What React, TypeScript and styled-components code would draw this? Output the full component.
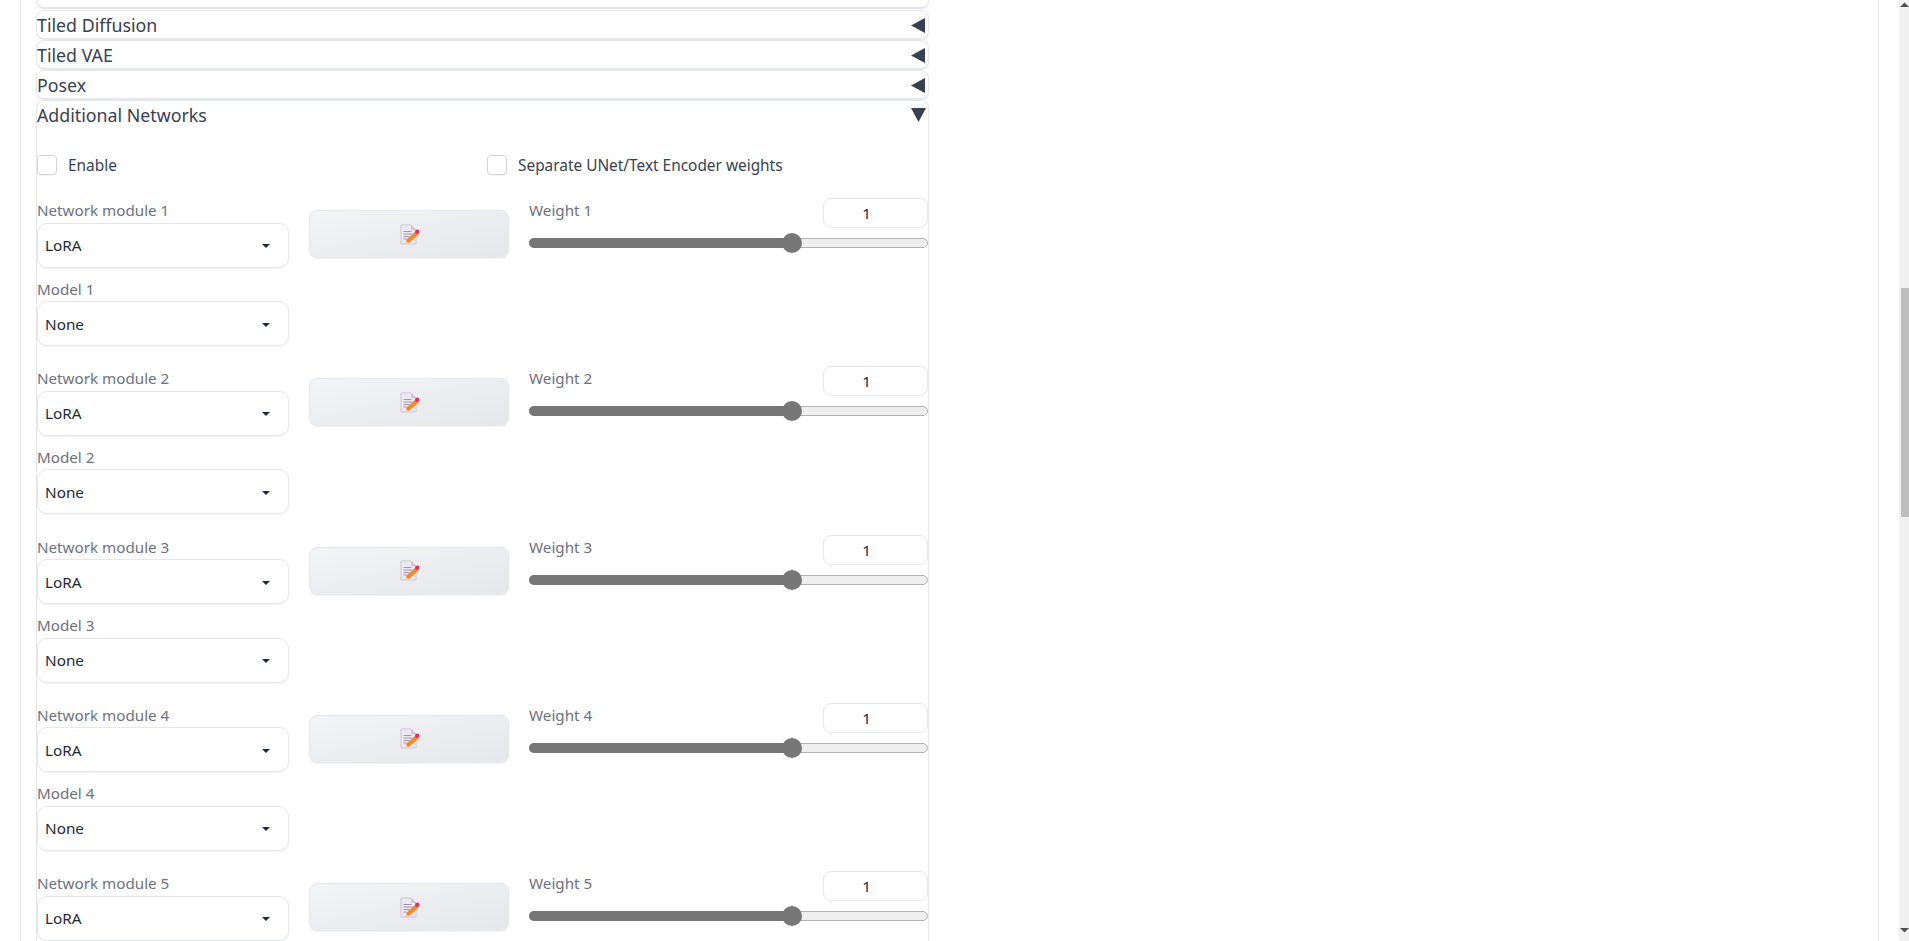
import styled, { createGlobalStyle } from "styled-components";

const GlobalStyle = createGlobalStyle`
  html, body {
    margin: 0;
    height: 941px;
    overflow: hidden;
    background: #fff;
    font-family: "Noto Sans", "Liberation Sans", sans-serif;
  }
`;

const Page = styled.div`
  display: flex;
  height: 941px;
  overflow: hidden;
`;

const Main = styled.div`
  flex: 1;
  padding-left: 20px;
  padding-right: 20px;
`;

const Panel = styled.div`
  height: 941px;
  box-sizing: border-box;
  border-left: 1px solid #e5e7eb;
  border-right: 1px solid #e5e7eb;
  padding-left: 15px;
`;

const Column = styled.div`
  width: 893px;
`;

const ClippedRow = styled.div`
  height: 9px;
  box-sizing: border-box;
  border: 1px solid #e5e7eb;
  border-top: 0;
  border-bottom-width: 2px;
  border-radius: 0 0 8px 8px;
  margin-bottom: 1px;
`;

const Accordion = styled.div<{ $open?: boolean }>`
  box-sizing: border-box;
  height: ${(p) => (p.$open ? "auto" : "30px")};
  border: 1px solid #e5e7eb;
  border-bottom: ${(p) => (p.$open ? "0" : "2px solid #e5e7eb")};
  border-radius: ${(p) => (p.$open ? "8px 8px 0 0" : "8px")};
`;

const AccordionHeader = styled.div`
  display: flex;
  align-items: center;
  justify-content: space-between;
  height: 27px;
  color: #374151;
  font-size: 17.8px;
`;

const Arrow = styled.svg`
  width: 15px;
  height: 15px;
  margin-top: 1px;
  margin-right: 2px;
  fill: #374151;
`;

const CheckRow = styled.div`
  display: flex;
  align-items: center;
  margin-top: 22px;
  height: 30px;
`;

const CheckItem = styled.label<{ $width?: number }>`
  display: flex;
  align-items: center;
  gap: 11px;
  width: ${(p) => (p.$width ? `${p.$width}px` : "auto")};
  color: #374151;
  font-size: 15.4px;
`;

const CheckBox = styled.span`
  display: block;
  width: 20px;
  height: 20px;
  box-sizing: border-box;
  border: 1px solid #d1d5db;
  border-radius: 4px;
  background: #fff;
  box-shadow: 0 1px 1px rgba(0, 0, 0, 0.05);
`;

const Networks = styled.div`
  margin-top: 19px;
`;

const NetworkBlock = styled.div`
  display: grid;
  grid-template-columns: 252px 200px 399px;
  column-gap: 20px;
  height: 168.25px;
`;

const Field = styled.div`
  display: flex;
  flex-direction: column;
`;

const FieldLabel = styled.div`
  height: 23px;
  line-height: 22px;
  color: #6b7280;
  font-size: 15.2px;
`;

const Select = styled.div`
  display: flex;
  align-items: center;
  justify-content: space-between;
  height: 45px;
  box-sizing: border-box;
  padding: 0 18px 0 7px;
  margin-top: 0.5px;
  margin-bottom: 10px;
  border: 1px solid #e5e7eb;
  border-radius: 10px;
  background: #fff;
  box-shadow: 0 1px 2px rgba(0, 0, 0, 0.05);
  color: #1f2937;
  font-size: 15.3px;
`;

const Caret = styled.span`
  display: block;
  width: 0;
  height: 0;
  margin-top: 2px;
  border-left: 4.5px solid transparent;
  border-right: 4.5px solid transparent;
  border-top: 4.5px solid #1f2937;
`;

const EditButton = styled.div`
  display: flex;
  align-items: center;
  justify-content: center;
  height: 48px;
  margin-top: 11px;
  padding-left: 2px;
  box-sizing: border-box;
  border: 1px solid #e5e7eb;
  border-radius: 8px;
  background: linear-gradient(to bottom right, #f3f4f6, #e5e7eb);
  box-shadow: 0 1px 1px rgba(0, 0, 0, 0.05);
`;

const WeightField = styled.div`
  display: flex;
  flex-direction: column;
`;

const WeightHead = styled.div`
  display: flex;
  justify-content: space-between;
  align-items: flex-start;
  height: 38px;
`;

const NumberBox = styled.div`
  width: 105px;
  height: 30px;
  margin-top: -1px;
  box-sizing: border-box;
  padding-right: 18px;
  border: 1px solid #e5e7eb;
  border-radius: 8px;
  color: #1f2937;
  font-size: 15.3px;
  line-height: 28px;
  text-align: center;
`;

const Track = styled.div`
  position: relative;
  height: 10px;
  box-sizing: border-box;
  margin-top: 1px;
  border: 1px solid #b2b2b2;
  border-radius: 5px;
  background: #efefef;
`;

const Fill = styled.div`
  position: absolute;
  left: -1px;
  top: -1px;
  bottom: -1px;
  border-radius: 5px 0 0 5px;
  background: #767676;
`;

const Thumb = styled.div`
  position: absolute;
  top: -6px;
  width: 20px;
  height: 20px;
  margin-left: -10px;
  border-radius: 50%;
  background: #767676;
`;

const Scrollbar = styled.div`
  display: flex;
  flex-direction: column;
  justify-content: space-between;
  position: relative;
  width: 10px;
  height: 941px;
  background: #f0f0f0;
`;

const ScrollThumb = styled.div`
  position: absolute;
  top: 288px;
  left: 2px;
  right: 0;
  height: 229px;
  background: #bdbdbd;
`;

const ScrollArrow = styled.svg<{ $down?: boolean }>`
  display: block;
  width: 10px;
  height: 10px;
  margin: ${(p) => (p.$down ? "0 0 6px" : "0")};
  fill: #505050;
`;

const EditIcon = () => (
  <svg width="20" height="21" viewBox="0 0 20 21">
    <path d="M1 1h10l5 5v14H1z" fill="#ece9f2" stroke="#c9c3d4" strokeWidth="1" />
    <path d="M11 1v5h5z" fill="#cfc9da" />
    <path d="M3.5 7.5h8M3.5 10h9M3.5 12.500h6M3.5 15h3" stroke="#9d97a8" strokeWidth="1" />
    <path d="M5.500 19.500l1-4 9-8 3 3-9 8z" fill="#f7882a" />
    <path d="M5.500 19.500l.6-2.500 1.900 1.700z" fill="#f9d9a8" />
    <circle cx="17.200" cy="7.800" r="2.200" fill="#f5295f" />
  </svg>
);

const Slider = ({ percent }: { percent: number }) => (
  <Track>
    <Fill style={{ width: `${percent}%` }} />
    <Thumb style={{ left: `${percent}%` }} />
  </Track>
);

const NetworkRow = ({ index, showModel }: { index: number; showModel: boolean }) => (
  <NetworkBlock>
    <Field>
      <FieldLabel>Network module {index}</FieldLabel>
      <Select>
        LoRA
        <Caret />
      </Select>
      {showModel && (
        <>
          <FieldLabel>Model {index}</FieldLabel>
          <Select>
            None
            <Caret />
          </Select>
        </>
      )}
    </Field>
    <div>
      <EditButton>
        <EditIcon />
      </EditButton>
    </div>
    <WeightField>
      <WeightHead>
        <FieldLabel>Weight {index}</FieldLabel>
        <NumberBox>1</NumberBox>
      </WeightHead>
      <Slider percent={66} />
    </WeightField>
  </NetworkBlock>
);

const Closed = ({ title }: { title: string }) => (
  <Accordion>
    <AccordionHeader>
      {title}
      <Arrow viewBox="0 0 15 15">
        <path d="M0 7.500L14 0v15z" />
      </Arrow>
    </AccordionHeader>
  </Accordion>
);

export default function App() {
  return (
    <Page>
      <GlobalStyle />
      <Main>
        <Panel>
          <Column>
            <ClippedRow />
            <Closed title="Tiled Diffusion" />
            <Closed title="Tiled VAE" />
            <Closed title="Posex" />
            <Accordion $open>
              <AccordionHeader>
                Additional Networks
                <Arrow viewBox="0 0 15 15">
                  <path d="M0 0h15L7.500 14z" />
                </Arrow>
              </AccordionHeader>
              <CheckRow>
                <CheckItem $width={450}>
                  <CheckBox />
                  Enable
                </CheckItem>
                <CheckItem>
                  <CheckBox />
                  Separate UNet/Text Encoder weights
                </CheckItem>
              </CheckRow>
              <Networks>
                {[1, 2, 3, 4, 5].map((n) => (
                  <NetworkRow key={n} index={n} showModel={n < 5} />
                ))}
              </Networks>
            </Accordion>
          </Column>
        </Panel>
      </Main>
      <Scrollbar>
        <ScrollArrow viewBox="0 0 10 10">
          <path d="M1 7l4.500-4.500V7zM5.500 2.500L10 7H5.500z" />
        </ScrollArrow>
        <ScrollThumb />
        <ScrollArrow $down viewBox="0 0 10 10">
          <path d="M1 3h9L5.500 7.500z" />
        </ScrollArrow>
      </Scrollbar>
    </Page>
  );
}
